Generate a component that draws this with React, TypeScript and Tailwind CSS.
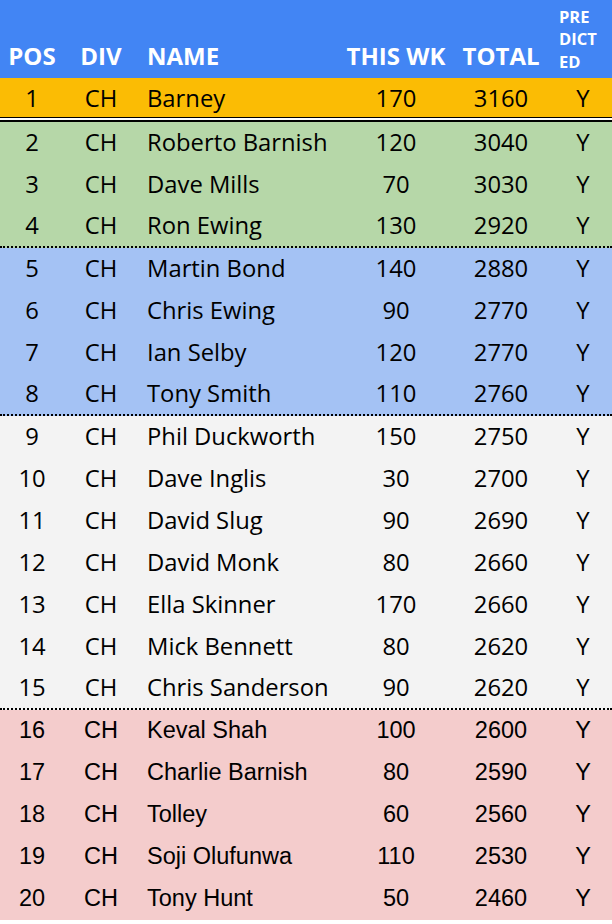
const rows: [number, string, number, number][] = [
  [1, 'Barney', 170, 3160],
  [2, 'Roberto Barnish', 120, 3040],
  [3, 'Dave Mills', 70, 3030],
  [4, 'Ron Ewing', 130, 2920],
  [5, 'Martin Bond', 140, 2880],
  [6, 'Chris Ewing', 90, 2770],
  [7, 'Ian Selby', 120, 2770],
  [8, 'Tony Smith', 110, 2760],
  [9, 'Phil Duckworth', 150, 2750],
  [10, 'Dave Inglis', 30, 2700],
  [11, 'David Slug', 90, 2690],
  [12, 'David Monk', 80, 2660],
  [13, 'Ella Skinner', 170, 2660],
  [14, 'Mick Bennett', 80, 2620],
  [15, 'Chris Sanderson', 90, 2620],
  [16, 'Keval Shah', 100, 2600],
  [17, 'Charlie Barnish', 80, 2590],
  [18, 'Tolley', 60, 2560],
  [19, 'Soji Olufunwa', 110, 2530],
  [20, 'Tony Hunt', 50, 2460],
]

const cols = 'grid grid-cols-[64px_74px_202px_112px_98px_62px]'

function rowBg(pos: number) {
  if (pos === 1) return 'bg-[#fbbc04]'
  if (pos <= 4) return 'bg-[#b6d7a8]'
  if (pos <= 8) return 'bg-[#a4c2f4]'
  if (pos <= 15) return 'bg-[#f3f3f3]'
  return 'bg-[#f4cccc]'
}

export default function App() {
  return (
    <div className="w-[612px] h-[924px] bg-white text-black">
      <div className={`${cols} h-[78px] bg-[#4285f4] text-white font-bold items-end font-['Open_Sans',sans-serif] text-[24px] leading-none`}>
        <div className="text-center pb-[10px]">POS</div>
        <div className="text-center pb-[10px]">DIV</div>
        <div className="pl-[9px] pb-[10px]">NAME</div>
        <div className="text-center pb-[10px]">THIS WK</div>
        <div className="text-center pb-[10px]">TOTAL</div>
        <div className="pl-[9px] pb-[5px] text-[16.5px] leading-[22.5px]">
          PRE<br />DICT<br />ED
        </div>
      </div>
      {rows.map(([pos, name, wk, total]) => {
        const sep = pos === 4 || pos === 8 || pos === 15
        const font = pos >= 16
          ? "font-['Liberation_Sans',Arial,sans-serif] text-[23.5px]"
          : "font-['Open_Sans',sans-serif] text-[23.8px]"
        return (
          <div key={pos}>
            <div
              className={`${cols} items-center ${rowBg(pos)} ${font} ${pos === 1 ? 'h-[39px] pt-[2px]' : 'h-[42px]'} ${sep ? 'border-b-2 border-dotted border-black' : ''}`}
            >
              <div className="text-center">{pos}</div>
              <div className="text-center">CH</div>
              <div className="pl-[9px] whitespace-nowrap">{name}</div>
              <div className="text-center">{wk}</div>
              <div className="text-center">{total}</div>
              <div className="text-center pl-[4px]">Y</div>
            </div>
            {pos === 1 && <div className="h-[5px] bg-white border-t border-b-2 border-black" />}
          </div>
        )
      })}
    </div>
  )
}
